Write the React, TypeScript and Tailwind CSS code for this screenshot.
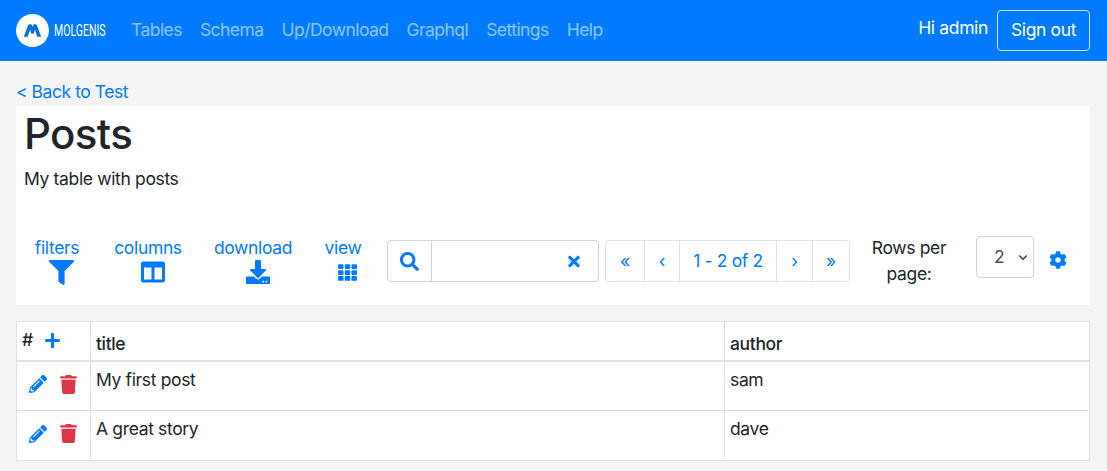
import React from 'react';
import { FaCog, FaColumns, FaDownload, FaFilter, FaPencilAlt, FaPlus, FaSearch, FaTh, FaTimes, FaTrash } from 'react-icons/fa';

const navItems = ['Tables', 'Schema', 'Up/Download', 'Graphql', 'Settings', 'Help'];

const Logo: React.FC = () => (
  <div className="flex items-center gap-[5px]">
    <div className="flex h-[33px] w-[33px] items-center justify-center rounded-full bg-white">
      <svg viewBox="0 0 24 18" className="h-[15px] w-[19px]">
        <path d="M1 17 L6.5 2 Q7 1 8 1 H10 Q11 1 11.3 2 L12 4.5 L12.7 2 Q13 1 14 1 H16 Q17 1 17.5 2 L23 17 H18 L15 8 L13.5 13 H10.5 L9 8 L6 17 Z" fill="#0a6fd8" />
      </svg>
    </div>
    <span className="w-[52px] origin-left whitespace-nowrap font-['Roboto',sans-serif] text-[17px] leading-none tracking-normal text-white [transform:scaleX(0.62)]">
      MOLGENIS
    </span>
  </div>
);

const Tool: React.FC<{ label: string; icon: React.ReactNode; className: string }> = ({ label, icon, className }) => (
  <div className={`flex flex-col items-center text-[#007bff] ${className}`}>
    <span className="whitespace-nowrap leading-[24px]">{label}</span>
    <div className="ml-[9px] flex h-[24px] items-center justify-center">{icon}</div>
  </div>
);

const PageButton: React.FC<{ children: React.ReactNode; className: string }> = ({ children, className }) => (
  <div className={`flex h-full items-center justify-center border-l border-[#dee2e6] first:border-l-0 ${className}`}>{children}</div>
);

const Row: React.FC<{ title: string; author: string }> = ({ title, author }) => (
  <tr className="h-[50px]">
    <td className="border border-[#dee2e6] pl-[12px] align-top">
      <div className="flex items-center gap-[13px] pt-[13px]">
        <FaPencilAlt className="h-[18px] w-[18px] text-[#007bff]" />
        <FaTrash className="h-[19px] w-[17px] text-[#dc3545]" />
      </div>
    </td>
    <td className="border border-[#dee2e6] px-[5px] pt-[5px] align-top">{title}</td>
    <td className="border border-[#dee2e6] px-[5px] pt-[5px] align-top">{author}</td>
  </tr>
);

export default function App() {
  return (
    <div className="min-h-[471px] overflow-hidden bg-[#f4f4f4] font-['Inter','Liberation_Sans',sans-serif] text-[17.5px] tracking-[-0.35px] text-[#212529]">
      <nav className="flex h-[61px] items-center bg-[#007bff] pl-[16px] pr-[17px]">
        <Logo />
        <div className="ml-[25px] flex gap-[18px] tracking-[-0.55px] text-white/55">
          {navItems.map((item) => (
            <span key={item}>{item}</span>
          ))}
        </div>
        <div className="ml-auto flex items-center gap-[9px] text-white">
          <span className="pb-[4px]">Hi admin</span>
          <div className="flex h-[41px] w-[93px] items-center justify-center rounded-[4px] border border-white/80">Sign out</div>
        </div>
      </nav>

      <main className="px-[16px] pt-[19px]">
        <a className="block h-[26px] leading-[24px] tracking-[-0.45px] text-[#007bff]">&lt; Back to Test</a>
        <section className="h-[199px] w-[1074px] bg-white">
          <div className="px-[8px]">
            <h1 className="pt-[2px] text-[42px] leading-[52px] font-medium tracking-[-0.6px]">Posts</h1>
            <p className="mt-[5px] leading-[28px]">My table with posts</p>
          </div>
          <div className="mt-[48px] flex items-start">
            <div className="ml-[8px] mt-[-5px] flex items-start">
              <Tool label="filters" className="w-[66px]" icon={<FaFilter className="h-[25px] w-[25px]" />} />
              <Tool label="columns" className="ml-[24px] w-[68px]" icon={<FaColumns className="h-[24px] w-[24px]" />} />
              <Tool label="download" className="ml-[33px] w-[76px]" icon={<FaDownload className="h-[24px] w-[24px]" />} />
              <Tool label="view" className="ml-[34px] w-[36px]" icon={<FaTh className="h-[19px] w-[19px]" />} />
            </div>
            <div className="ml-[26px] mt-[-1px] flex h-[42px] w-[212px] items-center rounded-[4px] border border-[#ced4da]">
              <div className="flex h-full w-[44px] items-center justify-center border-r border-[#ced4da] text-[#007bff]">
                <FaSearch className="h-[19px] w-[19px]" />
              </div>
              <div className="ml-auto pr-[16px] text-[#007bff]">
                <FaTimes className="h-[17px] w-[16px]" />
              </div>
            </div>
            <div className="ml-[6px] mt-[-1px] flex h-[42px] w-[245px] items-center rounded-[4px] border border-[#dee2e6] text-[#007bff]">
              <PageButton className="w-[38px]">«</PageButton>
              <PageButton className="w-[35px]">‹</PageButton>
              <PageButton className="w-[97px]">1 - 2 of 2</PageButton>
              <PageButton className="w-[36px]">›</PageButton>
              <PageButton className="w-[37px]">»</PageButton>
            </div>
            <div className="ml-[14px] mt-[-6px] w-[90px] text-center leading-[26px]">Rows per page:</div>
            <div className="ml-[22px] mt-[-5px] flex h-[42px] w-[58px] items-center justify-between rounded-[4px] border border-[#ced4da] pl-[17px] pr-[4px] text-[#495057]">
              <span>2</span>
              <svg viewBox="0 0 16 16" className="h-[12px] w-[12px]">
                <path d="M3 6 L8 11 L13 6" fill="none" stroke="#343a40" strokeWidth="2" />
              </svg>
            </div>
            <FaCog className="ml-[15px] mt-[10px] h-[18px] w-[18px] text-[#007bff]" />
          </div>
        </section>

        <table className="mt-[16px] w-[1074px] table-fixed border-collapse bg-white">
          <colgroup>
            <col className="w-[74px]" />
            <col className="w-[634px]" />
            <col />
          </colgroup>
          <thead>
            <tr className="h-[39px] border-b-2 border-[#dee2e6]">
              <th className="border border-[#dee2e6] pl-[5px] align-top">
                <div className="flex items-center gap-[11px] pt-[7px] font-medium">
                  <span className="leading-[22px]">#</span>
                  <FaPlus className="h-[17px] w-[17px] text-[#007bff]" />
                </div>
              </th>
              <th className="border border-[#dee2e6] px-[5px] pt-[9px] text-left align-top font-medium">title</th>
              <th className="border border-[#dee2e6] px-[5px] pt-[9px] text-left align-top font-medium">author</th>
            </tr>
          </thead>
          <tbody>
            <Row title="My first post" author="sam" />
            <Row title="A great story" author="dave" />
          </tbody>
        </table>
      </main>
    </div>
  );
}
